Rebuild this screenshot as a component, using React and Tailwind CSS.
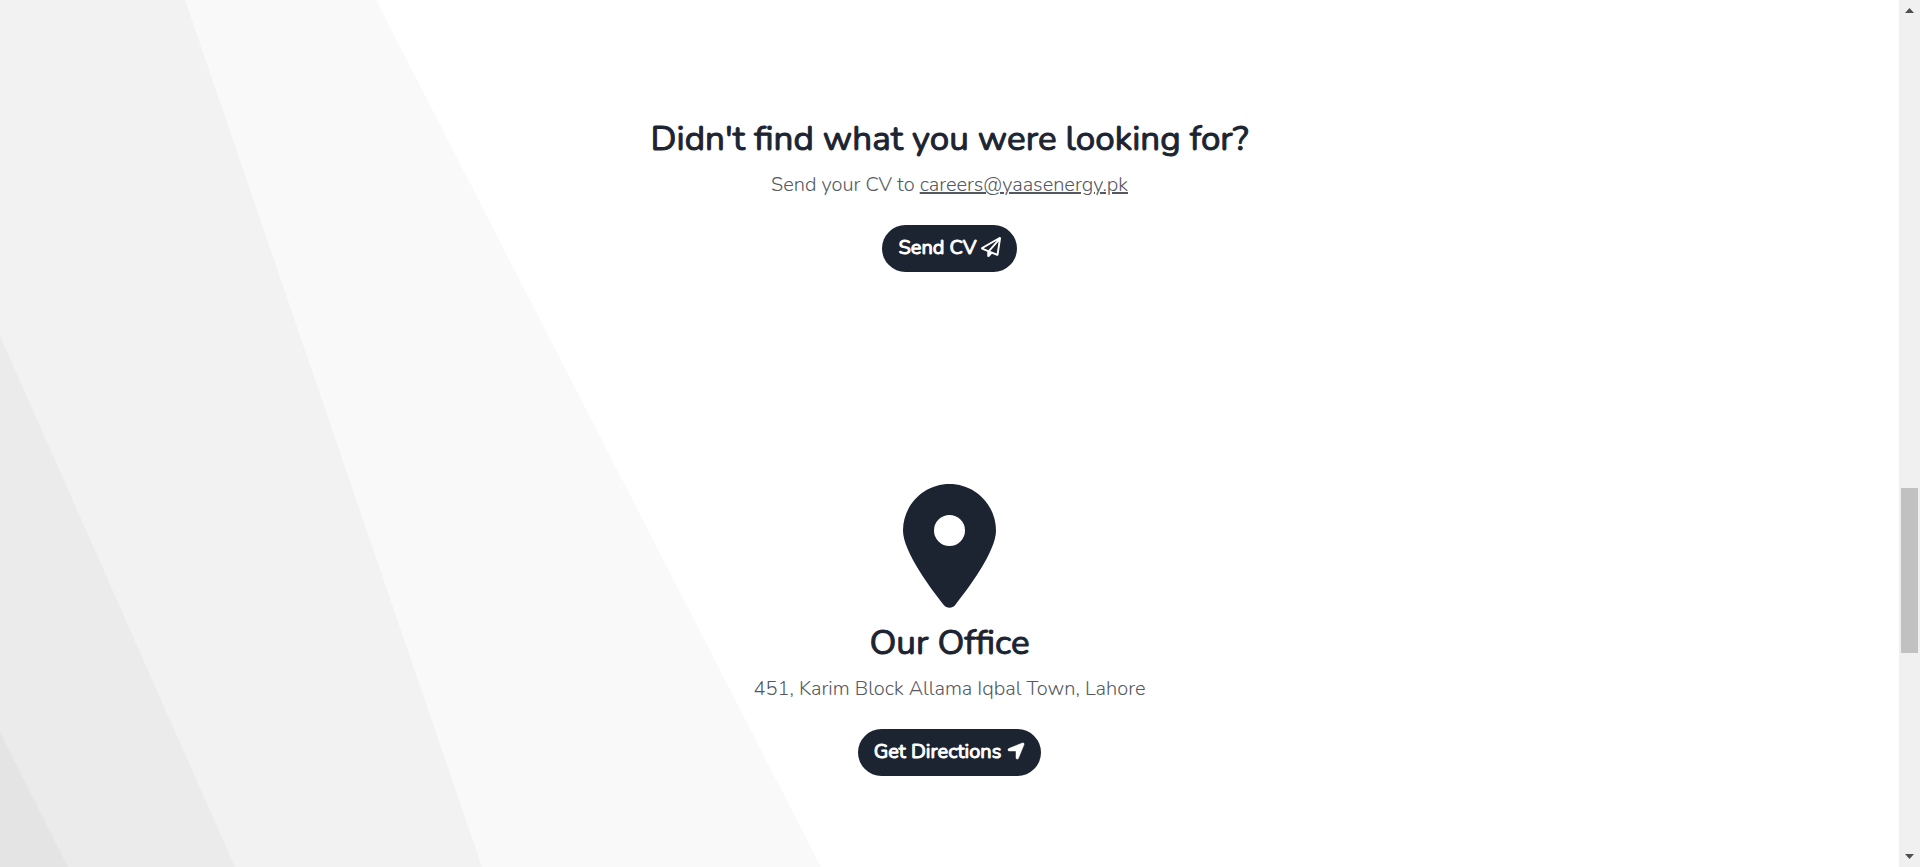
import { FaLocationArrow, FaLocationDot, FaRegPaperPlane } from "react-icons/fa6";

function Backdrop() {
  return (
    <svg
      className="absolute inset-0 -z-10 h-full w-full"
      viewBox="0 0 1899 867"
      preserveAspectRatio="none"
      aria-hidden="true"
    >
      <polygon points="0,0 376,0 821,867 0,867" fill="#f9f9f9" />
      <polygon points="0,0 185,0 482,867 0,867" fill="#f2f2f2" />
      <polygon points="0,336 235,867 0,867" fill="#ebebeb" />
      <polygon points="0,732 68,867 0,867" fill="#e4e4e4" />
    </svg>
  );
}

function PillLink({ href, label, children }) {
  return (
    <a
      href={href}
      className="mt-[25px] inline-flex items-center rounded-full bg-[#1d2431] px-4 pt-2 pb-[9px] text-xl leading-[30px] font-normal text-white"
    >
      <span className="[-webkit-text-stroke:1px_currentColor]">{label}</span>
      {children}
    </a>
  );
}

function Section({ icon, title, text, action }) {
  return (
    <section className="flex flex-col items-center text-center">
      {icon}
      <h2 className="text-[35px] leading-[41px] font-normal text-[#1d2431] [-webkit-text-stroke:1px_currentColor]">
        {title}
      </h2>
      <p className="mt-[11px] text-xl leading-[30px] font-light text-[#54595f]">{text}</p>
      {action}
    </section>
  );
}

function ScrollRail() {
  return (
    <div className="flex w-[21px] shrink-0 flex-col items-center bg-[#f0f0f0]" aria-hidden="true">
      <svg className="mt-2 h-[5px] w-[9px]" viewBox="0 0 9 5" fill="#505050">
        <path d="M4.5 0 9 5H0z" />
      </svg>
      <div className="grow-[475]" />
      <div className="h-[165px] w-[17px] bg-[#c1c1c1]" />
      <div className="grow-[201]" />
      <svg className="mb-2 h-[5px] w-[9px]" viewBox="0 0 9 5" fill="#505050">
        <path d="M4.5 5 9 0H0z" />
      </svg>
    </div>
  );
}

export default function App() {
  return (
    <div className="flex min-h-screen bg-white font-['Nunito','Noto_Sans',sans-serif]">
      <main className="relative isolate flex grow flex-col gap-[212px] pt-[118px]">
        <Backdrop />
        <Section
          title="Didn't find what you were looking for?"
          text={
            <>
              Send your CV to{" "}
              <a href="mailto:careers@yaasenergy.pk" className="underline">
                careers@yaasenergy.pk
              </a>
            </>
          }
          action={
            <PillLink href="mailto:careers@yaasenergy.pk" label="Send CV">
              <FaRegPaperPlane className="mb-0.5 ml-1 size-5" aria-hidden="true" />
            </PillLink>
          }
        />
        <Section
          icon={<FaLocationDot className="mb-[14px] h-[124px] w-[93px] text-[#1d2431]" aria-hidden="true" />}
          title="Our Office"
          text="451, Karim Block Allama Iqbal Town, Lahore"
          action={
            <PillLink href="#directions" label="Get Directions">
              <FaLocationArrow
                className="mb-0.5 ml-1.5 h-5 w-[18px] overflow-visible stroke-current stroke-[12px]"
                aria-hidden="true"
              />
            </PillLink>
          }
        />
      </main>
      <ScrollRail />
    </div>
  );
}
